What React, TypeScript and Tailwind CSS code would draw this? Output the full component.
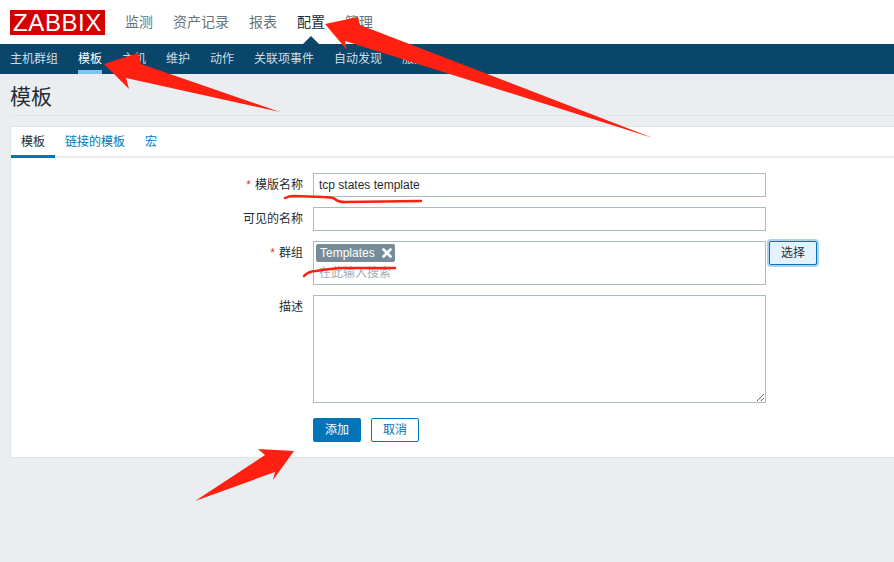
import { X } from "lucide-react";

const font = { fontFamily: '"Liberation Sans", "Noto Sans CJK SC", sans-serif' };

const topNav = ["监测", "资产记录", "报表", "配置", "管理"];
const subNav = ["主机群组", "模板", "主机", "维护", "动作", "关联项事件", "自动发现", "服务"];

function Label({ text, required }: { text: string; required?: boolean }) {
  return (
    <label className="w-[292px] shrink-0 text-right leading-[24px] text-[#1f2c33] pr-[10px] box-content -mr-[10px] pl-0">
      {required && <span className="text-[#e33734] mr-[4px]">*</span>}
      {text}
    </label>
  );
}

export default function App() {
  return (
    <div style={font} className="relative w-[894px] h-[562px] overflow-hidden bg-[#ebeef0] text-[12px]">
      {/* Top nav */}
      <header className="h-[44px] bg-white flex items-center pl-[10px]">
        <div className="w-[95px] h-[25px] bg-[#d40000] text-white text-[24px] leading-[25px] tracking-[0.6px] text-center">
          ZABBIX
        </div>
        <nav className="flex gap-[20px] ml-[20px] text-[14px]">
          {topNav.map((item) => (
            <span key={item} className={item === "配置" ? "relative text-[#1f2c33]" : "text-[#68747b]"}>
              {item}
              {item === "配置" && (
                <span className="absolute left-[6px] top-[24px] w-0 h-0 border-x-[8px] border-x-transparent border-b-[8px] border-b-[#0a466a]" />
              )}
            </span>
          ))}
        </nav>
      </header>

      {/* Sub nav */}
      <div className="h-[30px] bg-[#0a466a] flex gap-[20px] pl-[10px]">
        {subNav.map((item) => (
          <span
            key={item}
            className={
              item === "模板"
                ? "h-[30px] leading-[30px] text-white border-b-4 border-[#7fc4f0]"
                : "h-[30px] leading-[30px] text-[#cfdde6]"
            }
          >
            {item}
          </span>
        ))}
      </div>

      {/* Title */}
      <div className="ml-[10px] h-[42px] border-b border-[#dfe4e7] text-[21px] leading-[46px] text-[#1f2c33]">模板</div>

      {/* Card */}
      <div className="ml-[10px] -mr-[10px] mt-[10px] h-[332px] bg-white border border-[#dfe4e7]">
        <div className="h-[31px] border-b-2 border-[#ebeef0] flex">
          <span className="h-[31px] px-[10px] leading-[30px] text-[#1f2c33] border-b-[3px] border-[#0275b8]">模板</span>
          <span className="px-[10px] leading-[30px] text-[#0275b8]">链接的模板</span>
          <span className="px-[10px] leading-[30px] text-[#0275b8]">宏</span>
        </div>

        <form className="pt-[15px] flex flex-col gap-[10px]">
          <div className="flex">
            <Label text="模版名称" required />
            <input
              readOnly
              value="tcp states template"
              className="ml-[10px] w-[453px] h-[24px] border border-[#acbbc2] px-[5px] text-[#1f2c33] outline-none"
            />
          </div>
          <div className="flex">
            <Label text="可见的名称" />
            <input readOnly className="ml-[10px] w-[453px] h-[24px] border border-[#acbbc2] px-[5px] outline-none" />
          </div>
          <div className="flex">
            <Label text="群组" required />
            <div className="ml-[10px] w-[453px] h-[44px] border border-[#acbbc2] pl-[2px] pt-[2px]">
              <div className="w-[79px] h-[18px] bg-[#768d99] rounded-[2px] text-white flex items-center pl-[4px] leading-[18px]">
                Templates
                <X size={14} strokeWidth={4.5} className="ml-[5px]" />
              </div>
              <div className="pl-[3px] mt-[2px] text-[#a3aeb4] leading-[18px]">在此输入搜索</div>
            </div>
            <button
              type="button"
              className="ml-[3px] w-[48px] h-[24px] rounded-[2px] border border-[#0275b8] bg-[#e6f2fb] text-[#1f2c33] shadow-[0_0_0_2px_#a9d2f0]"
            >
              选择
            </button>
          </div>
          <div className="flex">
            <Label text="描述" />
            <textarea readOnly className="ml-[10px] w-[453px] h-[108px] border border-[#acbbc2] outline-none" />
          </div>
          <div className="flex gap-[10px] ml-[302px] mt-[5px]">
            <button type="button" className="w-[48px] h-[24px] rounded-[2px] bg-[#0275b8] text-white">添加</button>
            <button type="button" className="w-[48px] h-[24px] rounded-[2px] border border-[#0275b8] bg-white text-[#0275b8]">取消</button>
          </div>
        </form>
      </div>

      {/* Red annotations drawn over the screenshot */}
      <svg className="absolute inset-0 pointer-events-none" width="894" height="562" viewBox="0 0 894 562">
        <g fill="#ff2011">
          <polygon points="325,24 358,17 360,25 653,138 345,41 347,50" />
          <polygon points="104,64 138,53 141,64 280,112 126,78 129,89" />
          <polygon points="294,451 258,449 265,455 195,501 275,472 273,480" />
        </g>
        <g fill="none" stroke="#ff2011" strokeWidth="2.5" strokeLinecap="round" strokeLinejoin="round">
          <path d="M285 198 Q289 196 294 196 L323 197 Q332 197 335 199 Q338 202 345 202 L421 201" />
          <path d="M304 276 Q309 271 316 271 Q328 269 340 268 L395 268" />
        </g>
      </svg>
    </div>
  );
}
